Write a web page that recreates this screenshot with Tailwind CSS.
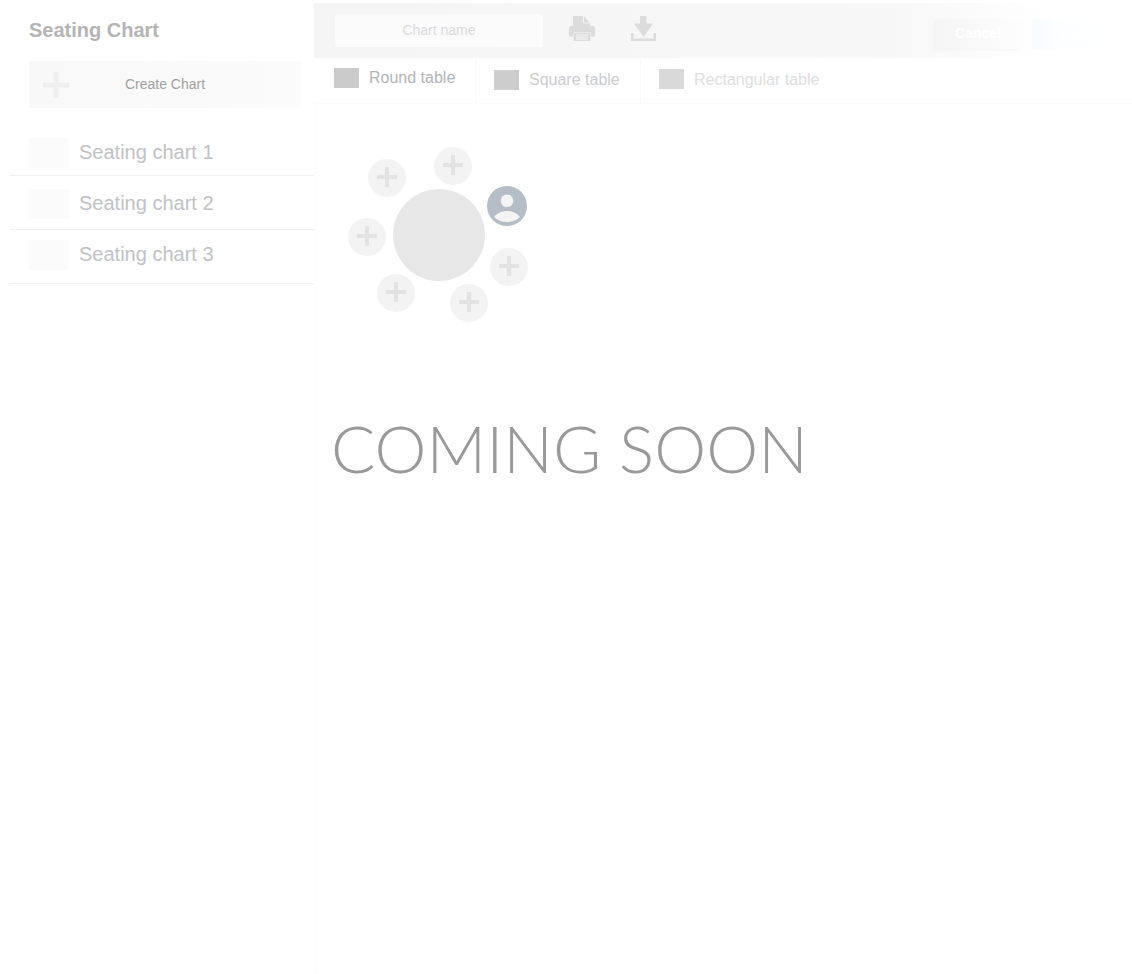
<!DOCTYPE html>
<html>
<head>
<meta charset="utf-8">
<script src="https://cdn.jsdelivr.net/npm/@tailwindcss/browser@4"></script>
</head>
<body class="bg-white overflow-hidden">
<div class="flex w-[1132px] h-[974px] font-['Liberation_Sans',Arial,sans-serif]">
  <aside class="w-[314px] shrink-0 pl-[10px]">
    <h1 class="pl-[19px] pt-[18px] h-[61px] text-[20px] leading-[24px] font-bold text-[#b4b4b4]">Seating Chart</h1>
    <button class="ml-[19px] w-[272px] h-[47px] flex items-center relative bg-gradient-to-r from-[#f8f8f8] to-[#fbfbfb]">
      <svg class="ml-[14px] w-[26px] h-[26px]" viewBox="0 0 26 26"><path d="M10.500 0h5v10.500H26v5H15.500V26h-5V15.500H0v-5h10.500z" fill="#efefef"/></svg>
      <span class="absolute left-0 right-0 pb-[2px] text-center text-[14px] leading-[16px] text-[#a0a0a0]">Create Chart</span>
    </button>
    <ul class="mt-[16px]">
      <li class="h-[52px] pt-[14px] pl-[19px] flex items-start gap-[10px] border-b border-[#f0f0f0]">
        <span class="w-[40px] h-[30px] bg-[#fbfbfb]"></span>
        <span class="text-[20px] leading-[28px] text-[#c0c2c5]">Seating chart 1</span>
      </li>
      <li class="h-[54px] pt-[13px] pl-[19px] flex items-start gap-[10px] border-b border-[#f0f0f0]">
        <span class="w-[40px] h-[30px] bg-[#fbfbfb]"></span>
        <span class="text-[20px] leading-[28px] text-[#c0c2c5]">Seating chart 2</span>
      </li>
      <li class="h-[54px] pt-[10px] pl-[19px] flex items-start gap-[10px] border-b border-[#f0f0f0]">
        <span class="w-[40px] h-[30px] bg-[#fbfbfb]"></span>
        <span class="text-[20px] leading-[28px] text-[#c0c2c5]">Seating chart 3</span>
      </li>
    </ul>
  </aside>
  <main class="flex-1 min-w-0 pt-[3px]">
    <header class="h-[55px] flex items-center pl-[21px] pr-[12px] bg-gradient-to-r from-[#f5f5f5] via-[#f7f7f7] via-70% to-[#ffffff] to-90%">
      <div class="w-[208px] h-[33px] bg-[#fbfbfb] rounded-[2px] flex items-center justify-center text-[14px] text-[#d8dadc]">Chart name</div>
      <svg class="self-start mt-[13px] ml-[26px] w-[26px] h-[25px]" viewBox="0 0 26 25" fill="#dcdcdc">
        <path d="M4 0h10.500L21 7v3H4z"/>
        <path d="M14.500 0v7H21" fill="none" stroke="#f4f4f4" stroke-width="1"/>
        <path d="M2.500 10h21a2.500 2.500 0 0 1 2.500 2.500v7a1 1 0 0 1-1 1H22v-4H4v4H1a1 1 0 0 1-1-1v-7A2.500 2.500 0 0 1 2.500 10z"/>
        <path d="M4.500 17h17v8h-17z"/>
        <path d="M7 18.500h12v1H7zM7 20.500h12v1H7zM7 22.500h12v1H7z" fill="#f6f6f6"/>
      </svg>
      <svg class="self-start mt-[13px] ml-[36px] w-[25px] h-[25px]" viewBox="0 0 25 25" fill="#dcdcdc">
        <path d="M9 0h6.500v7.500H22L12.500 21 3 7.500h6z"/>
        <path d="M0 17h2.500v5.500h20V17H25v8H0z"/>
      </svg>
      <button class="ml-auto w-[88px] h-[30px] mt-[6px] rounded-[2px] bg-gradient-to-r from-[#f5f5f5] to-[#fdfdfd] shadow-[0_1px_3px_rgba(0,0,0,0.03)] text-[14px] font-bold text-white">Cancel</button>
      <button class="ml-[10px] w-[88px] h-[30px] mt-[6px] rounded-[2px] bg-gradient-to-r from-[#f8fcff] via-[#fdfeff] via-40% to-[#ffffff] text-[14px] font-bold text-white">Save</button>
    </header>
    <nav class="h-[45px] flex">
      <div class="w-[162px] pl-[20px] pt-[10px] flex items-start gap-[10px] border-r border-[#f9f9f9]">
        <span class="w-[25px] h-[20px] bg-[#cbcbcb]"></span>
        <span class="text-[16px] leading-[20px] text-[#b2b4b6]">Round table</span>
      </div>
      <div class="w-[165px] pl-[18px] pt-[12px] flex items-start gap-[10px] border-r border-[#f9f9f9]">
        <span class="w-[25px] h-[20px] bg-[#cdcdcd]"></span>
        <span class="text-[16px] leading-[20px] text-[#cbcdcf]">Square table</span>
      </div>
      <div class="pl-[18px] pt-[11px] flex items-start gap-[10px]">
        <span class="w-[25px] h-[20px] bg-[#d9d9d9]"></span>
        <span class="text-[16px] leading-[20px] pt-px text-[#dddee0]">Rectangular table</span>
      </div>
    </nav>
    <section class="relative h-[870px] ml-[1px] border-l border-t border-[#fbfbfb]">
      <div class="absolute left-[77px] top-[85px] w-[92px] h-[92px] rounded-full bg-[#e7e7e7]"></div>

      <div class="absolute left-[52px] top-[55px] w-[38px] h-[38px] rounded-full bg-[#f3f3f3] flex items-center justify-center"><svg class="w-[20px] h-[20px] mb-[2px]" viewBox="0 0 20 20"><path d="M8 0h4v8h8v4h-8v8H8v-8H0V8h8z" fill="#e3e3e3"/></svg></div>
      <div class="absolute left-[118px] top-[43px] w-[38px] h-[38px] rounded-full bg-[#f3f3f3] flex items-center justify-center"><svg class="w-[20px] h-[20px] mb-[2px]" viewBox="0 0 20 20"><path d="M8 0h4v8h8v4h-8v8H8v-8H0V8h8z" fill="#e3e3e3"/></svg></div>
      <div class="absolute left-[32px] top-[114px] w-[38px] h-[38px] rounded-full bg-[#f3f3f3] flex items-center justify-center"><svg class="w-[20px] h-[20px] mb-[2px]" viewBox="0 0 20 20"><path d="M8 0h4v8h8v4h-8v8H8v-8H0V8h8z" fill="#e3e3e3"/></svg></div>
      <div class="absolute left-[61px] top-[170px] w-[38px] h-[38px] rounded-full bg-[#f3f3f3] flex items-center justify-center"><svg class="w-[20px] h-[20px] mb-[2px]" viewBox="0 0 20 20"><path d="M8 0h4v8h8v4h-8v8H8v-8H0V8h8z" fill="#e3e3e3"/></svg></div>
      <div class="absolute left-[134px] top-[180px] w-[38px] h-[38px] rounded-full bg-[#f3f3f3] flex items-center justify-center"><svg class="w-[20px] h-[20px] mb-[2px]" viewBox="0 0 20 20"><path d="M8 0h4v8h8v4h-8v8H8v-8H0V8h8z" fill="#e3e3e3"/></svg></div>
      <div class="absolute left-[174px] top-[144px] w-[38px] h-[38px] rounded-full bg-[#f3f3f3] flex items-center justify-center"><svg class="w-[20px] h-[20px] mb-[2px]" viewBox="0 0 20 20"><path d="M8 0h4v8h8v4h-8v8H8v-8H0V8h8z" fill="#e3e3e3"/></svg></div>

      <svg class="absolute left-[171px] top-[82px] w-[40px] h-[40px]" viewBox="0 0 40 40">
        <circle cx="20" cy="20" r="20" fill="#b5bec6"/>
        <circle cx="20" cy="14.700" r="6.300" fill="#f4f4f4"/>
        <path d="M7 31C10 27 15 25 20 25S30 27 33 31C30 34 25 36 20 36S10 34 7 31z" fill="#f4f4f4"/>
      </svg>

      <div class="absolute left-[15px] top-[304px] font-['Lato',sans-serif] font-light text-[65.700px] leading-[80px] whitespace-nowrap text-[#999999]">COMING SOON</div>
    </section>
  </main>
</div>
</body>
</html>
